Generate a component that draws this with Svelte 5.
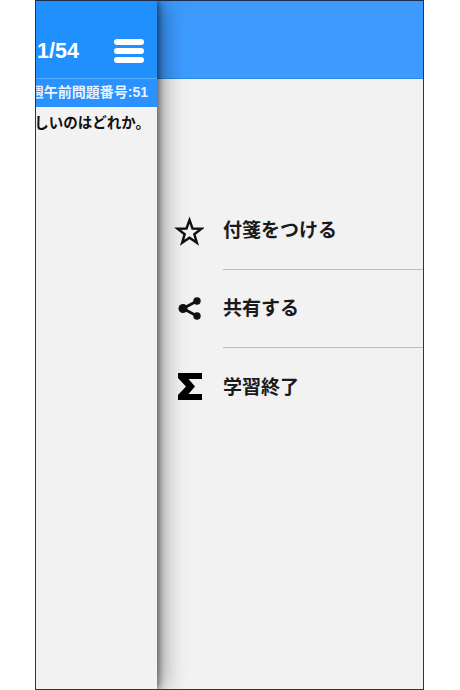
<script>
	const items = [
		{ label: '付箋をつける', icon: 'star' },
		{ label: '共有する', icon: 'share' },
		{ label: '学習終了', icon: 'sigma' }
	];
</script>

<div class="phone">
	<section class="front">
		<header class="bar">
			<span class="count">1/54</span>
			<div class="burger"><i></i><i></i><i></i></div>
		</header>
		<div class="sub"><span>平成31年第1週午前問題番号:51</span></div>
		<div class="question"><span>次のうち正しいのはどれか。</span></div>
	</section>

	<aside class="menu">
		<div class="menu-bar"></div>
		<ul>
			{#each items as item}
				<li>
					<span class="icon">
						{#if item.icon === 'star'}
							<svg width="30" height="30" viewBox="0 0 30 30">
								<path d="M15.500 4l3 8.500 9 .2-7.200 5.500 2.600 8.600-7.400-5.100-7.400 5.100 2.600-8.600-7.200-5.500 9-.2z" fill="none" stroke="#111" stroke-width="2.400" />
							</svg>
						{:else if item.icon === 'share'}
							<svg width="30" height="30" viewBox="0 0 30 30">
								<path d="M23 7L9 14.500 23 22" fill="none" stroke="#111" stroke-width="2.800" />
								<circle cx="23" cy="7" r="3.700" fill="#111" />
								<circle cx="9" cy="14.500" r="4.500" fill="#111" />
								<circle cx="23" cy="22" r="3.700" fill="#111" />
							</svg>
						{:else}
							<svg width="30" height="30" viewBox="0 0 30 30">
								<path d="M4 1h24v6H14.500l6.500 7.500-6.500 7.500H28v6H4v-5l8-8.500-8-8.500z" fill="#000" />
							</svg>
						{/if}
					</span>
					<span class="label">{item.label}</span>
				</li>
			{/each}
		</ul>
	</aside>
</div>

<style>
	:global(body) {
		margin: 0;
		background: #fff;
	}

	.phone {
		box-sizing: border-box;
		display: flex;
		width: 389px;
		height: 690px;
		margin-left: 35px;
		border: 1px solid #333;
		border-top-color: #1c2b4a;
		background: #f2f2f2;
		overflow: hidden;
		font-family: "Liberation Sans", "Noto Sans CJK JP", sans-serif;
	}

	.front {
		position: relative;
		z-index: 1;
		flex: 0 0 121px;
		width: 121px;
		background: #f2f2f2;
		box-shadow: 2px 0 6px rgba(0, 0, 0, 0.45), 6px 0 22px rgba(0, 0, 0, 0.4);
		overflow: hidden;
	}

	.bar {
		display: flex;
		align-items: center;
		height: 77px;
		padding: 22px 13px 0 1px;
		box-sizing: border-box;
		background: #2090ff;
		color: #fff;
	}

	.count {
		flex: 1;
		padding-top: 2px;
		font-size: 21.500px;
		font-weight: 700;
	}

	.burger {
		display: flex;
		flex-direction: column;
		gap: 3px;
		width: 30px;
	}

	.burger i {
		display: block;
		height: 6px;
		border-radius: 3px;
		background: #fff;
	}

	.sub,
	.question {
		display: flex;
		justify-content: flex-end;
		white-space: nowrap;
		font-weight: 700;
	}

	.sub {
		height: 29px;
		align-items: center;
		padding: 0 9px 4px 0;
		border-top: 1px solid #5aaeff;
		box-sizing: border-box;
		background: #2a91ff;
		color: #e8f3ff;
		font-size: 14px;
	}

	.question {
		padding: 6px 7px 0 0;
		color: #111;
		font-size: 14.500px;
		line-height: 20px;
	}

	.menu {
		flex: 1;
		min-width: 0;
	}

	.menu-bar {
		height: 77px;
		border-bottom: 1px solid #2f86e0;
		background: #3d9bff;
	}

	ul {
		margin: 0;
		padding: 113px 0 0;
		list-style: none;
	}

	li {
		display: flex;
		align-items: center;
		height: 78px;
		box-sizing: border-box;
		padding-left: 17px;
	}

	.icon {
		display: flex;
		flex: 0 0 30px;
		margin-right: 19px;
	}

	.label {
		flex: 1;
		align-self: stretch;
		display: flex;
		align-items: center;
		padding-bottom: 4px;
		border-bottom: 1px solid #bdbdbd;
		color: #1a1a1a;
		font-size: 19px;
		font-weight: 700;
	}

	li:last-child .label {
		border-bottom: 0;
	}
</style>
